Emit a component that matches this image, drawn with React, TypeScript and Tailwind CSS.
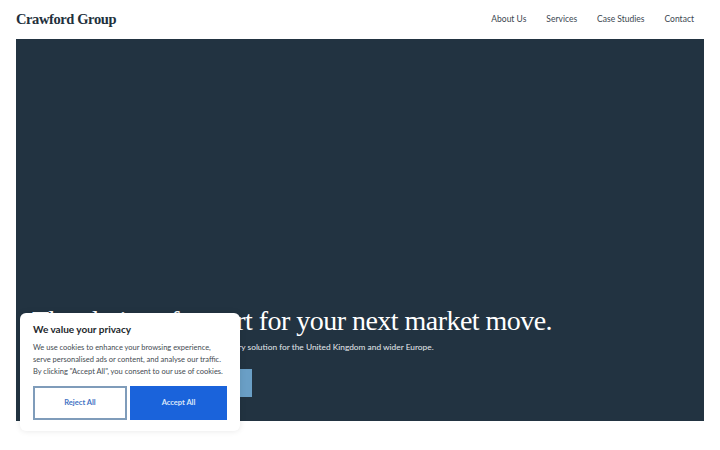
export default function App() {
  return (
    <div className="relative h-[450px] w-[720px] overflow-hidden bg-white font-['Lato',sans-serif]">
      <header className="flex h-[39px] items-center justify-between pl-4 pr-[26px]">
        <div className="font-['Liberation_Serif',serif] text-[14.5px] font-bold leading-none tracking-[-0.4px] text-[#22303c]">Crawford Group</div>
        <nav className="flex gap-5 text-[8.5px] text-[#3b4650]">
          <a>About Us</a>
          <a>Services</a>
          <a>Case Studies</a>
          <a>Contact</a>
        </nav>
      </header>
      <section className="mx-4 flex h-[382px] flex-col justify-end bg-[#223341] pb-6 pl-4 text-white">
        <h1 className="font-['Liberation_Serif',serif] text-[28px] leading-[36px] tracking-[-0.53px]">The choice of expert for your next market move.</h1>
        <p className="text-[8.35px] leading-4 text-[#e5e9ec]">Your trusted advisory partner and a complete market entry solution for the United Kingdom and wider Europe.</p>
        <a className="mt-[14px] flex h-7 w-[220px] items-center justify-center bg-[#6a9fc6] text-[9px]">Learn more</a>
      </section>
      <div className="absolute left-5 top-[313px] w-[220px] rounded-md bg-white px-[13px] pb-[11px] pt-2 shadow-[0_0_6px_rgba(0,0,0,0.1)]">
        <h2 className="text-[10px] font-bold leading-4 text-[#23272b]">We value your privacy</h2>
        <p className="mt-[5px] whitespace-nowrap text-[7.5px] leading-3 text-[#444b52]">
          We use cookies to enhance your browsing experience,<br />
          serve personalised ads or content, and analyse our traffic.<br />
          By clicking "Accept All", you consent to our use of cookies.
        </p>
        <div className="mt-2 flex gap-[3px]">
          <button className="h-[34px] w-[94px] border-2 border-[#7f9cba] bg-white text-[7.5px] font-bold text-[#3f72c4]">Reject All</button>
          <button className="h-[34px] w-[97px] bg-[#1a63db] text-[7.5px] font-bold text-[#dbe7fa]">Accept All</button>
        </div>
      </div>
    </div>
  );
}
